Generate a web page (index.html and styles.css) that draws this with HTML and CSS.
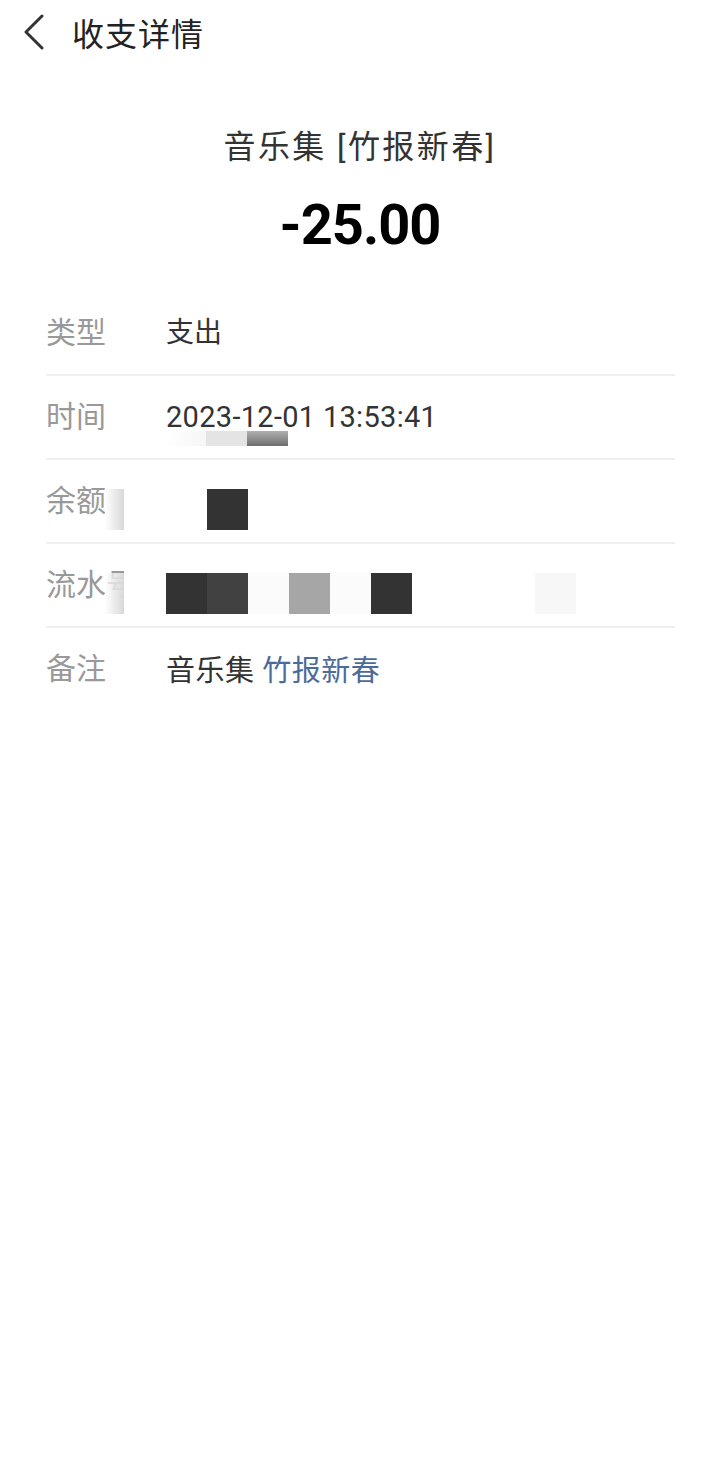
FILE: index.html
```html
<!DOCTYPE html>
<html lang="zh-CN">
<head>
<meta charset="utf-8">
<title>收支详情</title>
<link rel="stylesheet" href="styles.css">
</head>
<body>
<div class="page">
  <header class="topbar">
    <svg class="back" width="24" height="36" viewBox="0 0 24 36" aria-hidden="true">
      <path d="M20 2 L4 18 L20 34" fill="none" stroke="#333" stroke-width="3" stroke-linecap="round" stroke-linejoin="round"/>
    </svg>
    <h1 class="title">收支详情</h1>
  </header>

  <section class="summary">
    <div class="merchant">音乐集 [竹报新春]</div>
    <div class="amount">-25.00</div>
  </section>

  <section class="rows">
    <div class="row">
      <div class="label">类型</div>
      <div class="value">支出</div>
    </div>
    <div class="row">
      <div class="label">时间</div>
      <div class="value num">2023-12-01 13:53:41</div>
      <div class="smear smear-time">
        <span class="px px-a"></span><span class="px px-b"></span><span class="px px-c"></span>
      </div>
    </div>
    <div class="row">
      <div class="label">余额<span class="fade"></span></div>
      <div class="value blocks">
        <span class="blk"></span><span class="blk dark"></span>
      </div>
    </div>
    <div class="row">
      <div class="label">流水号<span class="fade wide"></span></div>
      <div class="value blocks">
        <span class="blk dark"></span><span class="blk dark2"></span><span class="blk faint"></span><span class="blk mid"></span><span class="blk faint"></span><span class="blk dark"></span><span class="blk"></span><span class="blk"></span><span class="blk"></span><span class="blk faint2"></span>
      </div>
    </div>
    <div class="row last">
      <div class="label">备注</div>
      <div class="value remark">音乐集 <span class="link">竹报新春</span></div>
    </div>
  </section>
</div>
</body>
</html>
```
FILE: styles.css
```css
html, body {
  margin: 0;
  padding: 0;
  background: #ffffff;
}
body {
  font-family: Roboto, "Noto Sans CJK SC", sans-serif;
  color: #333333;
}
.page {
  width: 720px;
  min-height: 1483px;
}
.topbar {
  height: 64px;
  display: flex;
  align-items: center;
  padding-left: 22px;
}
.back {
  display: block;
}
.title {
  margin: 0 0 0 26px;
  font-family: "Noto Sans CJK SC", sans-serif;
  font-weight: 400;
  font-size: 32px;
  letter-spacing: 1px;
  color: #222222;
  line-height: 40px;
}
.summary {
  display: flex;
  flex-direction: column;
  align-items: center;
  padding-top: 63px;
}
.merchant {
  font-size: 32px;
  line-height: 40px;
  letter-spacing: 2.4px;
  color: #333333;
}
.amount {
  margin-top: 26px;
  font-family: Roboto, sans-serif;
  font-weight: 700;
  font-size: 56px;
  line-height: 64px;
  letter-spacing: -1px;
  color: #000000;
}
.rows {
  margin-top: 35px;
  padding: 0 45px 0 46px;
}
.row {
  position: relative;
  height: 82px;
  display: flex;
  align-items: center;
  border-bottom: 2px solid #f0f0f0;
}
.row.last {
  border-bottom: none;
}
.label {
  position: relative;
  width: 120px;
  flex: none;
  font-size: 30px;
  color: #999999;
  line-height: 40px;
  white-space: nowrap;
}
.value {
  font-size: 28px;
  color: #333333;
  line-height: 40px;
}
.num {
  font-size: 29px;
  letter-spacing: 0.3px;
}
.fade {
  position: absolute;
  left: 59px;
  top: 8px;
  width: 19px;
  height: 41px;
  background: linear-gradient(to right, rgba(255,255,255,0.7), #d8d8d8);
}
.fade.wide {
  top: -4px;
  width: 40px;
  height: 53px;
  background:
    linear-gradient(to right, rgba(255,255,255,0.7), #d8d8d8) 0 12px / 19px 41px no-repeat,
    linear-gradient(#ffffff, #ffffff) 19px 0 / 21px 53px no-repeat;
}
.blocks {
  display: flex;
  margin-top: 16px;
  height: 41px;
}
.blk {
  width: 41px;
  height: 41px;
  flex: none;
  background: #ffffff;
}
.blk.dark { background: #333333; }
.blk.dark2 { background: #414141; }
.blk.mid { background: #a6a6a6; }
.blk.faint { background: #fbfbfb; }
.blk.faint2 { background: #f7f7f7; }
.smear {
  position: absolute;
  left: 119px;
  top: 55px;
  display: flex;
  height: 15px;
}
.px {
  width: 41px;
  height: 15px;
}
.px-a { background: linear-gradient(to right, #ffffff, #f6f6f6); }
.px-b { background: #e4e4e4; }
.px-c { background: linear-gradient(to bottom, #b0b0b0, #6e6e6e); }
.remark {
  font-size: 29px;
  letter-spacing: 0.5px;
  margin-top: 4px;
}
.link {
  color: #4d6b98;
}
```
